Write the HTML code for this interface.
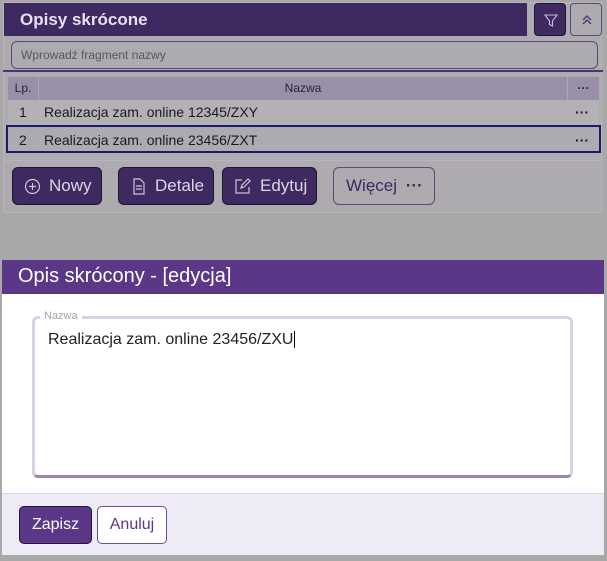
<!DOCTYPE html>
<html><head><meta charset="utf-8"><style>
*{box-sizing:border-box;margin:0;padding:0}
body{width:607px;height:561px;background:#a8a8a8;font-family:"Liberation Sans",Arial,sans-serif;position:relative;overflow:hidden}
.abs{position:absolute}
.panel{left:3px;top:2px;width:599px;height:211px;background:#adabb0;border:1px solid #b8b4bd}
.hdr{left:4px;top:3px;width:523px;height:33px;background:#3e2960;color:#e6e0ee;font-weight:bold;font-size:17px;padding:7px 16px}
.ib{top:3px;width:32px;height:33px;border-radius:4px}
.search{left:11px;top:41px;width:587px;height:28px;border:1px solid #5a4a74;border-radius:6px;font-size:12px;color:#5a5560;padding:6px 9px}
.line{left:3px;top:70px;width:600px;height:2px;background:#4a3570}
.th{top:77px;height:23px;background:#9a8fa8;font-size:12px;color:#2a2530;line-height:23px}
.row{left:8px;width:591px;font-size:14px;color:#1a1a1a}
.btn{top:167px;height:38px;border-radius:6px;background:#3e2960;border:1px solid #1e1530;color:#ddd6e8;font-size:17px;line-height:36px}
.dlg{left:2px;top:260px;width:602px;height:295px;background:#fff}
</style></head><body>
<div class="abs panel"></div>
<div class="abs hdr">Opisy skrócone</div>
<div class="abs ib" style="left:534px;background:#3e2960;border:1px solid #1e1530">
<svg width="32" height="33" viewBox="0 0 32 33"><path d="M10 11h12l-4.5 6v5l-3 -1.5v-3.5z" fill="none" stroke="#c8c0d6" stroke-width="1.1"/></svg></div>
<div class="abs ib" style="left:570px;border:1px solid #5a4a74">
<svg width="32" height="33" viewBox="0 0 32 33"><path d="M12 16l4-4 4 4M12 20l4-4 4 4" fill="none" stroke="#4a3570" stroke-width="1.3"/></svg></div>
<div class="abs search">Wprowadź fragment nazwy</div>
<div class="abs line"></div>
<div class="abs th" style="left:8px;width:30px;text-align:center">Lp.</div>
<div class="abs th" style="left:39px;width:528px;text-align:center">Nazwa</div>
<div class="abs th" style="left:568px;width:31px;text-align:center;font-weight:bold">···</div>
<div class="abs row" style="top:100px;height:25px;line-height:25px;background:#b3b1b6"><span style="position:absolute;left:11px">1</span><span style="position:absolute;left:36px">Realizacja zam. online 12345/ZXY</span><span style="position:absolute;right:10px;font-weight:bold">···</span></div>
<div class="abs row" style="top:125px;height:28px;line-height:26px;background:#adabb1;border:2px solid #1a1a6e;left:6px;width:595px"><span style="position:absolute;left:11px">2</span><span style="position:absolute;left:36px">Realizacja zam. online 23456/ZXT</span><span style="position:absolute;right:10px;font-weight:bold">···</span></div>
<div class="abs" style="left:3px;top:160px;width:600px;height:1px;background:#b9b1c6"></div>
<div class="abs btn" style="left:12px;width:90px"><svg class="abs" style="left:11px;top:10px" width="17" height="17"><circle cx="8.5" cy="8.5" r="7" fill="none" stroke="#ccc3da" stroke-width="1.2"/><path d="M8.5 5v7M5 8.5h7" stroke="#ccc3da" stroke-width="1.2"/></svg><span style="position:absolute;left:36px">Nowy</span></div>
<div class="abs btn" style="left:118px;width:96px"><svg class="abs" style="left:13px;top:10px" width="14" height="17"><path d="M2 1h6l4 4v11H2z M4 8h6M4 11h6" fill="none" stroke="#ccc3da" stroke-width="1.2"/></svg><span style="position:absolute;left:36px">Detale</span></div>
<div class="abs btn" style="left:222px;width:95px"><svg class="abs" style="left:11px;top:10px" width="17" height="17"><path d="M8 2H2v13h13V9 M7 10l1-3 6-6 2 2-6 6z" fill="none" stroke="#ccc3da" stroke-width="1.2"/></svg><span style="position:absolute;left:37px">Edytuj</span></div>
<div class="abs btn" style="left:333px;width:102px;background:transparent;border:1px solid #5a4a74;color:#3e2960"><span style="position:absolute;left:12px">Więcej <b style="margin-left:4px">···</b></span></div>
<div class="abs dlg">
<div style="height:34px;background:#5a3787;color:#fff;font-size:20px;padding:5px 16px">Opis skrócony - [edycja]</div>
<div class="abs" style="left:30px;top:56px;width:541px;height:162px;border:3px solid #d8d0e6;border-bottom-color:#9a86bb;border-radius:6px;font-size:16px;color:#222;padding:12px 13px">Realizacja zam. online 23456/ZXU<span style="border-left:1px solid #000;margin-left:1px"></span></div>
<div class="abs" style="left:38px;top:50px;background:#fff;padding:0 4px;font-size:11px;color:#a8a0b0">Nazwa</div>
<div class="abs" style="left:0;top:233px;width:602px;height:62px;background:#efebf6;border-top:1px solid #ddd6e8"></div>
<div class="abs" style="left:17px;top:246px;width:73px;height:38px;background:#5a3787;border:1px solid #221538;border-radius:5px;color:#fff;font-size:16px;line-height:36px;text-align:center">Zapisz</div>
<div class="abs" style="left:95px;top:246px;width:70px;height:38px;border:1px solid #6a5290;border-radius:5px;color:#5a3787;font-size:16px;line-height:36px;text-align:center;background:#fff">Anuluj</div>
</div>
</body></html>
